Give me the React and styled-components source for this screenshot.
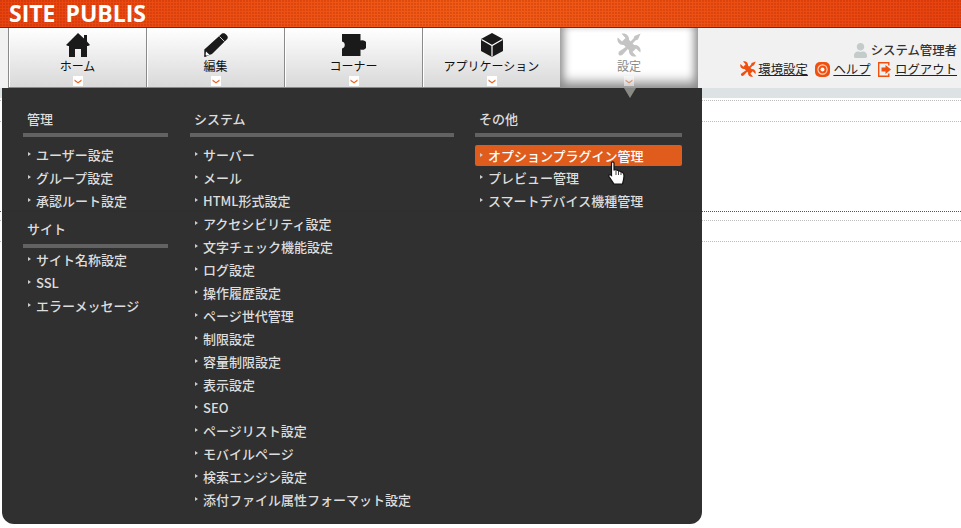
import React from 'react';
import styled, { createGlobalStyle } from 'styled-components';
import { FaUser } from 'react-icons/fa';

const Global = createGlobalStyle`
  html, body {
    margin: 0;
    padding: 0;
    background: #fff;
    font-family: "Noto Sans CJK JP", "Noto Sans", sans-serif;
  }
`;

const Page = styled.div`
  position: relative;
  width: 961px;
  height: 528px;
  overflow: hidden;
`;

const Header = styled.header`
  height: 26px;
  padding: 1px 0 0 9px;
  border-bottom: 1px solid #5a3020;
  background:
    radial-gradient(circle at 1px 1px, rgba(150, 30, 0, 0.22) 1px, transparent 1px) 0 0 / 3px 3px,
    linear-gradient(to right, #e8420f 0%, #f25c16 50%, #e8420f 100%);
`;

const Logo = styled.div`
  font-family: "Open Sans", sans-serif;
  font-weight: 700;
  font-size: 23px;
  line-height: 25px;
  color: #fff;
  word-spacing: 4px;
`;

const NavBar = styled.nav`
  height: 60px;
  background: #f1f1f1;
  display: flex;
  padding-left: 8px;
  justify-content: space-between;
`;

const Tabs = styled.div`
  display: flex;
`;

const Tab = styled.div`
  width: 138px;
  box-sizing: border-box;
  border-left: 1px solid #8a8a8a;
  border-bottom: 1px solid #8a8a8a;
  box-shadow: inset 1px 0 0 #fff;
  background: linear-gradient(to bottom, #fff, #d9d9d9);
  display: flex;
  flex-direction: column;
  align-items: center;
  padding-top: 5px;
  color: #111;
  font-size: 12px;
  line-height: 15px;

  ${p => p.$active && `
    border-left: none;
    border-bottom: none;
    color: #888;
    background: #fff;
    box-shadow: inset 0 -10px 12px -4px #8c8c8c, inset 8px 0 10px -5px #8c8c8c, inset -8px 0 10px -5px #8c8c8c;
  `}
`;

const TabIcon = styled.div`
  height: 24px;
  display: flex;
  align-items: center;
  justify-content: center;
  color: ${p => (p.$active ? '#c4c4c4' : '#1a1a1a')};
`;

const TabLabel = styled.span`
  margin-top: 1px;
`;

const Chevron = styled.span`
  width: 10px;
  height: 10px;
  margin-top: 3px;
  background: #fff;
  display: flex;
  align-items: center;
  justify-content: center;
  opacity: ${p => (p.$active ? 0.5 : 1)};
`;

const UserBox = styled.div`
  display: flex;
  flex-direction: column;
  align-items: flex-end;
  padding: 13px 4px 0 0;
  font-size: 12.4px;
  color: #222;
  line-height: 18px;
`;

const UserName = styled.div`
  display: flex;
  align-items: center;
  gap: 3px;
  font-weight: 500;
  color: #333;
`;

const Links = styled.div`
  display: flex;
  gap: 7.5px;
  margin-top: 1px;
`;

const LinkItem = styled.a`
  display: flex;
  align-items: center;
  gap: ${p => p.$gap}px;
  color: #222;
`;

const LinkText = styled.span`
  text-decoration: underline;
`;

const SubBar = styled.div`
  height: 10px;
  background: #dde2e5;
`;

const Content = styled.div`
  padding-top: 2px;
`;

const Rule = styled.div`
  height: ${p => p.$h}px;
  box-sizing: border-box;
  border-bottom: 1px dotted ${p => (p.$dark ? '#555' : '#bbb')};
`;

const Panel = styled.div`
  position: absolute;
  left: 2px;
  top: 88px;
  width: 700px;
  height: 436px;
  background: rgba(44, 44, 44, 0.98);
  border-radius: 0 0 12px 12px;
  display: flex;
  padding: 22px 0 0 21px;
  box-sizing: border-box;
  color: #ddd;
  font-size: 13px;
`;

const Pointer = styled.div`
  position: absolute;
  left: 622px;
  top: 0;
  width: 0;
  height: 0;
  border-left: 6px solid transparent;
  border-right: 6px solid transparent;
  border-top: 10px solid #8a8a84;
`;

const Column = styled.div`
  width: ${p => p.$w}px;
  margin-right: ${p => p.$gap}px;
  flex: none;
`;

const GroupTitle = styled.div`
  font-weight: 500;
  font-size: 13px;
  line-height: 18px;
  padding: 0 0 ${p => (p.$tight ? 6 : 5)}px 4px;
  color: #ddd;
  border-bottom: 4px solid #626262;
  margin-bottom: ${p => (p.$tight ? 0 : 6)}px;
`;

const List = styled.ul`
  list-style: none;
  display: flex;
  flex-direction: column;
  margin: 0 0 8px;
  padding: 0;
`;

const Item = styled.li`
  height: ${p => (p.$on ? 21 : 23)}px;
  margin-top: ${p => (p.$on ? 2 : 0)}px;
  display: flex;
  align-items: center;
  padding-left: 5px;
  box-sizing: border-box;
  border-radius: 2px;
  white-space: nowrap;
  font-weight: 500;
  color: ${p => (p.$on ? '#fff' : '#ddd')};
  background: ${p => (p.$on ? '#e05c1c' : 'transparent')};

  &::before {
    content: '';
    width: 0;
    height: 0;
    border-left: 3px solid #ccc;
    border-top: 2px solid transparent;
    border-bottom: 2px solid transparent;
    margin-right: 5px;
    margin-top: -2px;
    flex: none;
  }
`;

const Cursor = styled.svg`
  position: absolute;
  left: 608px;
  top: 161px;
`;

const ArrowDown = () => (
  <svg width="8" height="5" viewBox="0 0 8 5">
    <path d="M0.5 0.5 L4 3 L7.5 0.5 L7.5 2 L4 4.6 L0.5 2 Z" fill="#f0641e" />
  </svg>
);

const HomeIcon = () => (
  <svg width="24" height="24" viewBox="0 0 24 24" fill="currentColor">
    <path d="M12 0 L18 5.5 V2 H21 V8.5 L24 12 L22 13 H21 V24 H15 V16 H9 V24 H3 V13 H2 L0 12 Z" />
  </svg>
);

const PencilIcon = () => (
  <svg width="24" height="24" viewBox="0 0 24 24">
    <path d="M18 0.6 C19.5 -0.2 21 0.4 22 1.4 L22.8 2.2 C23.8 3.3 24.2 4.7 23.2 6 L8 21 L0.3 24 L0.3 16.5 Z" fill="currentColor" />
    <path d="M15.5 3.5 L20.5 8.5" stroke="#fff" strokeWidth="0.8" />
    <path d="M1.5 22.8 L2 18.5 L5.8 22 Z" fill="#fff" />
    <path d="M0.6 23.7 L0.8 21.5 L2.8 23.2 Z" fill="currentColor" />
  </svg>
);

const PuzzleIcon = () => (
  <svg width="24" height="22" viewBox="0 0 24 22" fill="currentColor">
    <path d="M0 0 H18.5 V6.5 A4.8 4.8 0 1 1 18.5 15.5 V22 H0 V14.5 A3.6 3.6 0 0 0 0 7.5 Z" />
  </svg>
);

const CubeIcon = () => (
  <svg width="22" height="24" viewBox="0 0 22 24">
    <path d="M11 0 L22 6 V18 L11 24 L0 18 V6 Z" fill="currentColor" />
    <path d="M0.5 6.5 L11 12.5 L21.5 6.5 M11 12.5 V23.5" stroke="#fff" strokeWidth="1.2" fill="none" />
  </svg>
);

const ToolsIcon = ({ size = 24 }) => (
  <svg width={size} height={size} viewBox="0 0 24 24" fill="currentColor">
    <path d="M0.8 4.5 L5 8.5 L8.5 5 L4.5 0.8 C8.5 -0.8 12.5 2.5 12 6.8 L17.2 12 C21.5 11.5 24.8 15.5 23.2 19.5 L19 15.5 L15.5 19 L19.5 23.2 C15.5 24.8 11.5 21.5 12 17.2 L6.8 12 C2.5 12.5 -0.8 8.5 0.8 4.5 Z" />
    <path d="M23.6 0.6 L21 6.5 L18.5 7.5 L14.8 11.2 L12.8 9.2 L16.5 5.5 L17.5 3 Z" />
    <path d="M10.2 13 L11 13.8 L11.8 15 L5.8 21.5 C4.6 22.8 2.9 22.8 2 21.9 C1.1 21 1.2 19.3 2.5 18.2 Z" />
  </svg>
);

const RingIcon = () => (
  <svg width="15" height="15" viewBox="0 0 15 15">
    <rect x="0" y="0" width="15" height="15" rx="5" fill="#f0500f" />
    <circle cx="7.5" cy="7.5" r="4.6" fill="none" stroke="#fbd9c8" strokeWidth="1.1" />
    <circle cx="7.5" cy="7.5" r="2" fill="#fff" />
  </svg>
);

const LogoutIcon = () => (
  <svg width="14" height="15" viewBox="0 0 14 15">
    <path d="M10.8 3.5 V0.7 H0.7 V14.3 H10.8 V11.5" fill="none" stroke="#f0500f" strokeWidth="1.4" />
    <path d="M3.5 5.5 H7.5 V3 L13 7.5 L7.5 12 V9.5 H3.5 Z" fill="#f0500f" />
  </svg>
);

const ToolsOrange = styled.span`
  display: flex;
  color: #f0500f;
`;

const menus = [
  {
    w: 145,
    gap: 22,
    groups: [
      { title: '管理', items: ['ユーザー設定', 'グループ設定', '承認ルート設定'] },
      { title: 'サイト', tight: true, items: ['サイト名称設定', 'SSL', 'エラーメッセージ'] },
    ],
  },
  {
    w: 264,
    gap: 21,
    groups: [
      {
        title: 'システム',
        items: [
          'サーバー', 'メール', 'HTML形式設定', 'アクセシビリティ設定', '文字チェック機能設定', 'ログ設定',
          '操作履歴設定', 'ページ世代管理', '制限設定', '容量制限設定', '表示設定', 'SEO',
          'ページリスト設定', 'モバイルページ', '検索エンジン設定', '添付ファイル属性フォーマット設定',
        ],
      },
    ],
  },
  {
    w: 207,
    gap: 0,
    groups: [
      { title: 'その他', items: ['オプションプラグイン管理', 'プレビュー管理', 'スマートデバイス機種管理'] },
    ],
  },
];

const tabs = [
  { label: 'ホーム', icon: <HomeIcon /> },
  { label: '編集', icon: <PencilIcon /> },
  { label: 'コーナー', icon: <PuzzleIcon /> },
  { label: 'アプリケーション', icon: <CubeIcon /> },
  { label: '設定', icon: <ToolsIcon />, active: true },
];

export default function App() {
  return (
    <Page>
      <Global />
      <Header>
        <Logo>SITE PUBLIS</Logo>
      </Header>
      <NavBar>
        <Tabs>
          {tabs.map(t => (
            <Tab key={t.label} $active={t.active}>
              <TabIcon $active={t.active}>{t.icon}</TabIcon>
              <TabLabel>{t.label}</TabLabel>
              <Chevron $active={t.active}><ArrowDown /></Chevron>
            </Tab>
          ))}
        </Tabs>
        <UserBox>
          <UserName><FaUser size={15} color="#c3cccb" />システム管理者</UserName>
          <Links>
            <LinkItem $gap={2}>
              <ToolsOrange><ToolsIcon size={16} /></ToolsOrange>
              <LinkText>環境設定</LinkText>
            </LinkItem>
            <LinkItem $gap={3}>
              <RingIcon />
              <LinkText>ヘルプ</LinkText>
            </LinkItem>
            <LinkItem $gap={3}>
              <LogoutIcon />
              <LinkText>ログアウト</LinkText>
            </LinkItem>
          </Links>
        </UserBox>
      </NavBar>
      <SubBar />
      <Content>
        <Rule $h={1} />
        <Rule $h={21} />
        <Rule $h={90} $dark />
        <Rule $h={9} />
        <Rule $h={21} />
      </Content>
      <Panel>
        <Pointer />
        {menus.map((col, i) => (
          <Column key={i} $w={col.w} $gap={col.gap}>
            {col.groups.map(g => (
              <div key={g.title}>
                <GroupTitle $tight={g.tight}>{g.title}</GroupTitle>
                <List>
                  {g.items.map(it => (
                    <Item key={it} $on={it === 'オプションプラグイン管理'}>{it}</Item>
                  ))}
                </List>
              </div>
            ))}
          </Column>
        ))}
      </Panel>
      <Cursor width="17" height="24" viewBox="0 0 17 24">
        <path d="M3.5 2 C3.5 0.5 6 0.5 6 2 L6 9 L8 9 L10 9.5 L12.5 10.5 L14.5 11.5 C15.8 12.3 16 13 16 15 L15.5 19 L14.5 23 L6 23 L1 15.5 C0.3 14 1.8 13 3.5 14.5 Z" fill="#fff" stroke="#111" strokeWidth="1.2" />
        <path d="M8 10 V14 M10.5 10 V14 M13 11 V14" stroke="#111" strokeWidth="0.8" />
      </Cursor>
    </Page>
  );
}
